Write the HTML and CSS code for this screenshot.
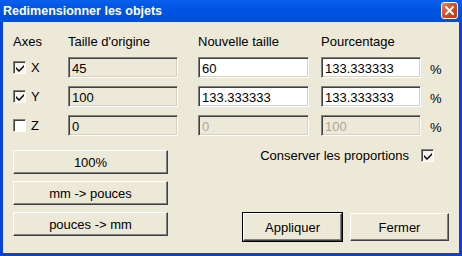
FILE: index.html
```html
<!DOCTYPE html>
<html lang="fr">
<head>
    <meta charset="UTF-8">
    <title>Redimensionner les objets</title>
    <link rel="stylesheet" href="styles.css">
</head>
<body>
    <div class="window">
        <div class="titlebar">
            <span class="title">Redimensionner les objets</span>
            <span class="close">
                <svg width="9" height="9" viewBox="0 0 9 9"><path d="M1 1 L8 8 M8 1 L1 8" stroke="#fff" stroke-width="2" stroke-linecap="square"/></svg>
            </span>
        </div>
        <div class="content">
            <div class="fields">
                <span class="head">Axes</span>
                <span class="head">Taille d'origine</span>
                <span class="head">Nouvelle taille</span>
                <span class="head">Pourcentage</span>
                <span></span>

                <label class="axis"><span class="check on"><svg width="8" height="8" viewBox="0 0 8 8"><path d="M0 3 L3 6 L8 1 V3 L3 8 L0 5 Z" fill="#000"/></svg></span>X</label>
                <span class="field ro w110">45</span>
                <span class="field w111">60</span>
                <span class="field w100">133.333333</span>
                <span class="pct">%</span>

                <label class="axis"><span class="check on"><svg width="8" height="8" viewBox="0 0 8 8"><path d="M0 3 L3 6 L8 1 V3 L3 8 L0 5 Z" fill="#000"/></svg></span>Y</label>
                <span class="field ro w110">100</span>
                <span class="field w111">133.333333</span>
                <span class="field w100">133.333333</span>
                <span class="pct">%</span>

                <label class="axis"><span class="check"></span>Z</label>
                <span class="field ro w110">0</span>
                <span class="field ro dis w111">0</span>
                <span class="field ro dis w100">100</span>
                <span class="pct">%</span>
            </div>

            <div class="lower">
                <div class="tools">
                    <button class="btn">100%</button>
                    <button class="btn">mm -&gt; pouces</button>
                    <button class="btn">pouces -&gt; mm</button>
                </div>
                <div class="side">
                    <label class="keep">Conserver les proportions <span class="check on"><svg width="8" height="8" viewBox="0 0 8 8"><path d="M0 3 L3 6 L8 1 V3 L3 8 L0 5 Z" fill="#000"/></svg></span></label>
                    <div class="actions">
                        <button class="btn big default">Appliquer</button>
                        <button class="btn big">Fermer</button>
                    </div>
                </div>
            </div>
        </div>
    </div>
</body>
</html>
```

FILE: styles.css
```css
body { margin: 0; font-family: "Liberation Sans", Arial, sans-serif; font-size: 13px; color: #000; }
.window { width: 462px; height: 256px; display: flex; flex-direction: column; background: #0842d8; }
.titlebar { height: 22px; display: flex; align-items: center; justify-content: space-between; padding: 0 4px 0 3px; background: linear-gradient(#0a5fec, #0054e3 40%, #0050da); }
.title { color: #fff; font-weight: bold; font-size: 12.5px; margin-top: -1px; }
.close { width: 15px; height: 15px; margin-top: -2px; display: flex; align-items: center; justify-content: center; border: 1px solid #fff; border-radius: 3px; background: linear-gradient(135deg, #e88868, #d8481c 50%, #c03810); }
.content { flex: 1; margin: 0 3px 3px 3px; background: #ece9d8; padding: 12px 0 0 10px; }
.fields { display: grid; grid-template-columns: 55px 130px 123px 109px 20px; grid-template-rows: 15px 21px 21px 21px; row-gap: 8px; align-items: center; }
.head { align-self: start; line-height: 14px; margin-top: 1px; }
.axis { display: flex; align-items: center; gap: 5px; }
.check { width: 11px; height: 11px; background: #fff; border: 1px solid; border-color: #808080 #fff #fff #808080; box-shadow: inset 1px 1px 0 #404040; display: inline-flex; align-items: center; justify-content: center; }
.check.on { background: #f4f3ee; }
.field { height: 21px; box-sizing: border-box; display: flex; align-items: center; padding: 1px 0 0 3px; background: #fff; border: 1px solid; border-color: #808080 #fff #fff #808080; box-shadow: inset 1px 1px 0 #404040, inset -1px -1px 0 #d4d0c8; }
.field.ro { background: #ece9d8; }
.field.dis { color: #aca899; }
.w110 { width: 110px; }
.w111 { width: 111px; }
.w100 { width: 100px; }
.pct { align-self: end; margin-bottom: 1px; }
.lower { display: flex; margin-top: 14px; }
.tools { display: flex; flex-direction: column; gap: 7px; width: 155px; }
.btn { height: 24px; box-sizing: border-box; font-family: inherit; font-size: 13px; background: #ece9d8; border: 1px solid; border-color: #fff #404040 #404040 #fff; box-shadow: inset -1px -1px 0 #808080; padding: 0; color: #000; }
.side { flex: 1; display: flex; flex-direction: column; align-items: flex-end; padding-right: 16px; }
.keep { display: flex; align-items: center; gap: 12px; margin-top: -2px; margin-right: 9px; }
.actions { display: flex; gap: 8px; margin-top: 50px; margin-right: -6px; }
.btn.big { width: 99px; height: 28px; }
.btn.default { outline: 1px solid #000; }
```
